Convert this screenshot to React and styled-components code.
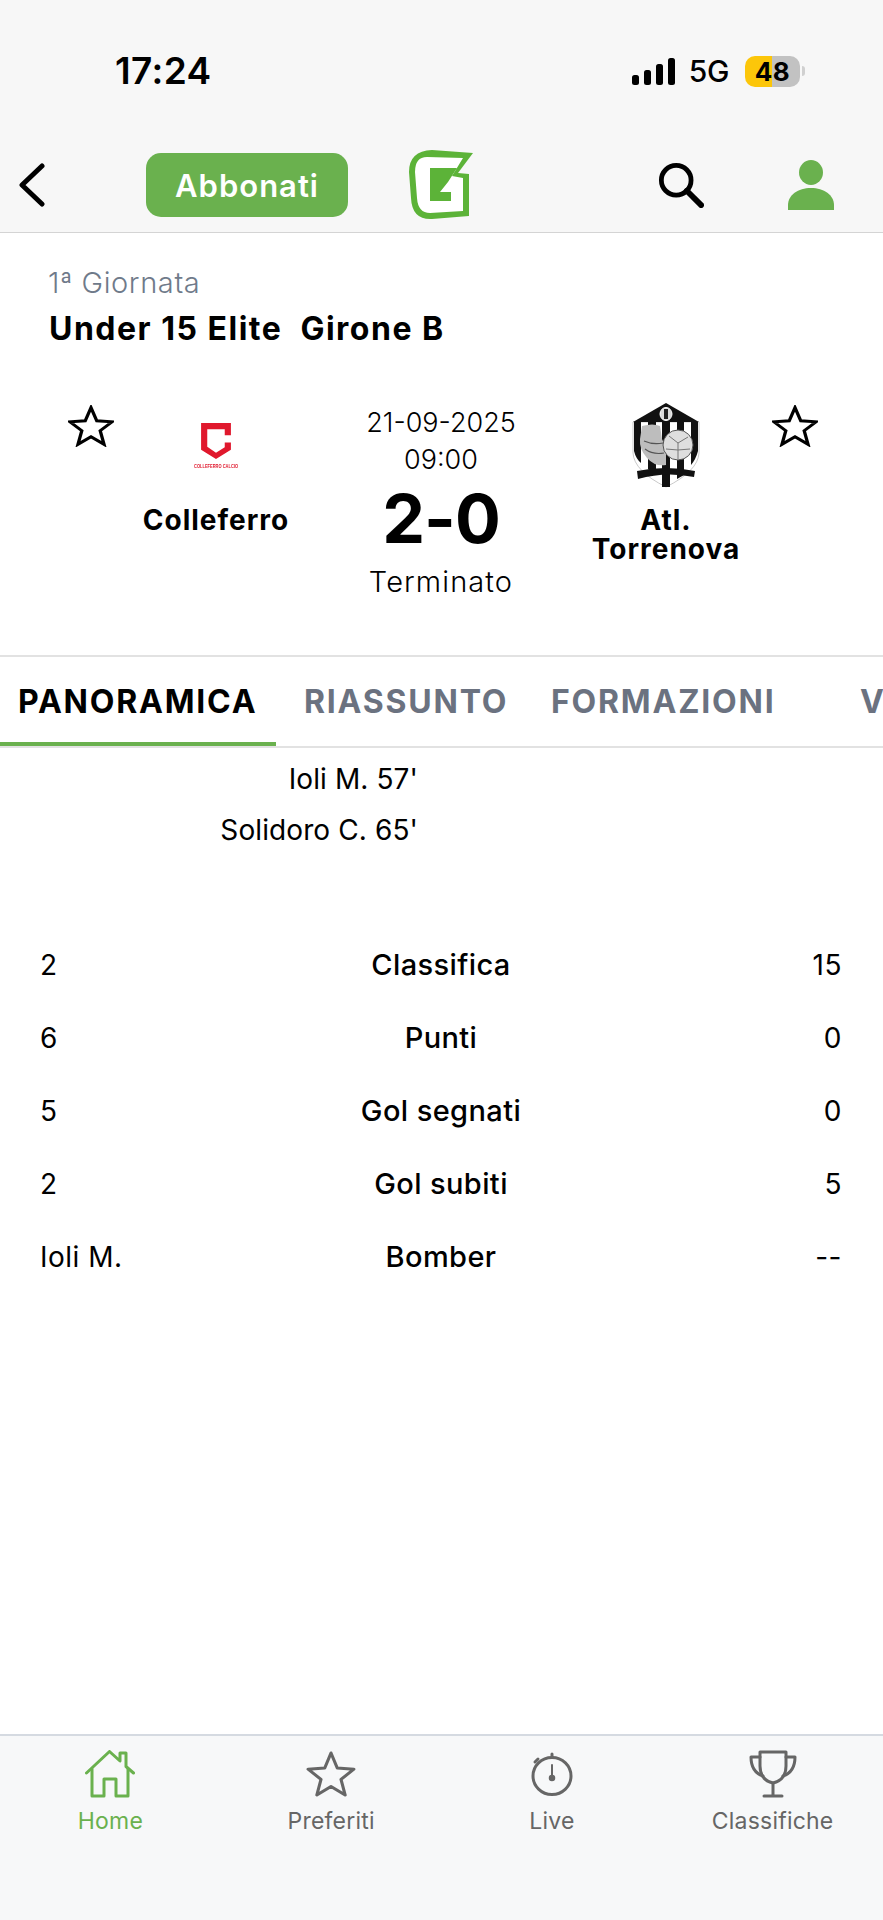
import React from "react";
import styled, { createGlobalStyle } from "styled-components";

const GlobalStyle = createGlobalStyle`
  html, body {
    margin: 0;
    padding: 0;
    background: #fff;
  }
  * {
    box-sizing: border-box;
  }
`;
const Page = styled.div`
  width: 883px;
  height: 1920px;
  display: flex;
  flex-direction: column;
  overflow: hidden;
  background: #fff;
  color: #000;
  font-family: Inter, "Open Sans", sans-serif;
`;
const TopArea = styled.header`
  background: #f7f7f7;
  border-bottom: 1px solid #d4d4d4;
`;
const StatusBar = styled.div`
  height: 138px;
  padding: 53px 78px 0 115px;
  display: flex;
  align-items: flex-start;
  justify-content: space-between;
`;
const Clock = styled.div`
  font-size: 37px;
  line-height: 36px;
  font-weight: 600;
  letter-spacing: 0.4px;
`;
const StatusIcons = styled.div`
  display: flex;
  align-items: center;
  height: 36px;
`;
const Network = styled.span`
  margin: 0 16px 0 14px;
  font-size: 30px;
  font-weight: 500;
  letter-spacing: -0.4px;
`;
const Battery = styled.div`
  width: 55px;
  height: 31px;
  border-radius: 10px;
  display: flex;
  align-items: center;
  justify-content: center;
  background: linear-gradient(to right, #fcc60a 0 49%, #c2c2c2 49% 100%);
  font-size: 26px;
  font-weight: 700;
  letter-spacing: 0.5px;
`;
const BatteryTip = styled.span`
  width: 3px;
  height: 10px;
  margin-left: 2px;
  border-radius: 0 3px 3px 0;
  background: #d0d0d0;
`;
const NavBar = styled.nav`
  height: 94px;
  padding-left: 19px;
  display: flex;
  align-items: center;
`;
const SubscribeButton = styled.button`
  width: 202px;
  height: 64px;
  margin: 0 59px 0 101px;
  padding: 0;
  border: 0;
  border-radius: 15px;
  background: #6ab14e;
  color: #fff;
  font-family: inherit;
  font-size: 31px;
  font-weight: 600;
  letter-spacing: 1px;
`;
const Logo = styled.svg`
  flex: none;
  margin-right: 183px;
`;
const SearchIcon = styled.svg`
  flex: none;
  margin-right: 84px;
`;
const Info = styled.section`
  padding: 32px 48px 0;
`;
const Round = styled.div`
  font-size: 29px;
  line-height: 36px;
  font-weight: 300;
  letter-spacing: 0.6px;
  color: #6f7a8a;
`;
const League = styled.h1`
  margin: 10px 0 0 1px;
  font-size: 32px;
  line-height: 36px;
  font-weight: 700;
  letter-spacing: 1.5px;
  white-space: pre;
`;
const Match = styled.section`
  height: 251px;
  margin-top: 57px;
  padding: 0 65px 0 68px;
  display: grid;
  grid-template-columns: 46px 204px 246px 204px 1fr;
  align-items: start;
`;
const FavStar = styled.svg`
  margin-top: 1px;
  justify-self: ${(p) => (p.$end ? "end" : "start")};
`;
const Team = styled.div`
  display: flex;
  flex-direction: column;
  align-items: center;
`;
const Crest = styled.div`
  height: 100px;
  display: flex;
  align-items: flex-start;
  justify-content: center;
`;
const ColleferroBadge = styled.div`
  margin-top: 19px;
  display: flex;
  flex-direction: column;
  align-items: center;
  gap: 4px;
  color: #e0182d;
`;
const BadgeText = styled.span`
  font-family: "Liberation Sans", sans-serif;
  font-size: 4px;
  line-height: 6px;
  font-weight: 700;
  white-space: nowrap;
  transform: scaleY(1.5);
`;
const TeamName = styled.div`
  margin-top: 2px;
  width: 190px;
  text-align: center;
  font-size: 28px;
  line-height: 29px;
  font-weight: 700;
  letter-spacing: 1px;
`;
const Center = styled.div`
  display: flex;
  flex-direction: column;
  align-items: center;
`;
const DateText = styled.div`
  font-size: 27px;
  line-height: 37px;
  font-weight: 300;
`;
const Score = styled.div`
  margin-top: -2px;
  font-size: 68px;
  line-height: 84px;
  font-weight: 700;
  letter-spacing: -1px;
`;
const MatchStatus = styled.div`
  margin-top: 4px;
  font-size: 29px;
  line-height: 36px;
  font-weight: 300;
  letter-spacing: 1.1px;
`;
const Tabs = styled.div`
  height: 93px;
  display: flex;
  gap: 10px;
  flex: none;
  overflow: hidden;
  border-top: 2px solid #e2e2e2;
  border-bottom: 2px solid #e2e2e2;
`;
const Tab = styled.div`
  position: relative;
  flex: none;
  width: ${(p) => p.$width}px;
  padding-left: 18px;
  line-height: 90px;
  font-size: 32px;
  font-weight: 700;
  letter-spacing: 1.8px;
  white-space: nowrap;
  color: ${(p) => (p.$active ? "#000" : "#6b7280")};
  &::after {
    content: "";
    display: ${(p) => (p.$active ? "block" : "none")};
    position: absolute;
    left: 0;
    right: 0;
    bottom: 0;
    height: 4px;
    background: #6ab14e;
  }
`;
const Main = styled.main`
  flex: 1;
`;
const Scorers = styled.div`
  width: 418px;
  margin-top: 6px;
  margin-bottom: 72px;
`;
const Scorer = styled.div`
  text-align: right;
  font-size: 28px;
  line-height: 51px;
  font-weight: 400;
  letter-spacing: 0.1px;
`;
const StatRow = styled.div`
  height: 73px;
  padding: 0 41px 0 40px;
  display: grid;
  grid-template-columns: 1fr auto 1fr;
  align-items: center;
  font-size: 28px;
  font-weight: 400;
  letter-spacing: 0.5px;
`;
const StatLabel = styled.span`
  font-size: 29px;
  font-weight: 450;
  letter-spacing: 0.4px;
`;
const StatRight = styled.span`
  text-align: right;
`;
const BottomNav = styled.nav`
  height: 186px;
  flex: none;
  padding-top: 14px;
  display: grid;
  grid-template-columns: repeat(4, 1fr);
  align-items: start;
  background: #f7f8f9;
  border-top: 2px solid #d5dae1;
`;
const NavItem = styled.div`
  display: flex;
  flex-direction: column;
  align-items: center;
  color: ${(p) => (p.$active ? "#6ab14e" : "#666")};
  font-size: 23px;
  font-weight: 400;
  letter-spacing: 0.2px;
`;
const NavIconBox = styled.div`
  height: 48px;
  display: flex;
  align-items: center;
  justify-content: center;
`;
const NavLabel = styled.span`
  margin-top: 9px;
  line-height: 28px;
`;

const STAR = "12,1.5 15,9 23,9.6 16.8,14.7 18.8,22.5 12,18.2 5.2,22.5 7.2,14.7 1,9.6 9,9";

const stats = [
  { left: "2", label: "Classifica", right: "15" },
  { left: "6", label: "Punti", right: "0" },
  { left: "5", label: "Gol segnati", right: "0" },
  { left: "2", label: "Gol subiti", right: "5" },
  { left: "Ioli M.", label: "Bomber", right: "--" },
];

function Signal() {
  return (
    <svg width="43" height="27" viewBox="0 0 43 27" fill="#000">
      <rect x="0" y="17" width="7" height="10" rx="2.5" />
      <rect x="12" y="12" width="7" height="15" rx="2.5" />
      <rect x="24" y="6" width="7" height="21" rx="2.5" />
      <rect x="36" y="0" width="7" height="27" rx="2.5" />
    </svg>
  );
}

function FavouriteStar({ end }) {
  return (
    <FavStar $end={end} width="46" height="42" viewBox="0 0 24 24" preserveAspectRatio="none">
      <polygon points={STAR} fill="none" stroke="#000" strokeWidth="1.7" strokeLinejoin="miter" />
    </FavStar>
  );
}

function Torrenova() {
  return (
    <svg width="68" height="86" viewBox="-1 -1 68 86" style={{ marginTop: -2, filter: "blur(0.5px)" }}>
      <path d="M0 19 H66 V50 Q65 68 33 84 Q1 68 0 50 Z" fill="#fff" stroke="#bbb" strokeWidth="0.8" />
      <path d="M1 19 H8 V60 Q3 56 1 48 Z" fill="#111" />
      <path d="M15 19 H23 V72 L15 66 Z" fill="#111" />
      <path d="M29 19 H37 V84 H29 Z" fill="#111" />
      <path d="M44 19 H51 V72 L44 76 Z" fill="#111" />
      <path d="M58 19 H65 V48 Q63 56 58 62 Z" fill="#111" />
      <path d="M33 0 L66 19 H0 Z" fill="#111" />
      <ellipse cx="33" cy="11" rx="6" ry="6.5" fill="#ddd" stroke="#fff" strokeWidth="1" />
      <rect x="31" y="6" width="4" height="10" fill="#222" />
      <path d="M9 23 Q20 20 27 23 L29 36 L33 45 L33 62 Q22 64 14 55 Q6 46 7 36 Z" fill="#bdbdbd" />
      <path d="M11 38 Q20 42 30 40 M12 46 Q20 52 31 50" stroke="#555" strokeWidth="1.2" fill="none" />
      <circle cx="45" cy="42" r="15" fill="#dedede" stroke="#555" strokeWidth="1" />
      <path d="M36 33 L45 40 L55 34 M45 40 L45 56 M33 46 L45 47 L57 46" stroke="#777" strokeWidth="1" fill="none" />
      <path d="M4 68 Q33 62 62 68 L61 74 Q33 68 5 76 Z" fill="#111" />
    </svg>
  );
}

function HomeIcon() {
  return (
    <svg width="50" height="48" viewBox="0 0 50 48" fill="none" stroke="#6ab14e" strokeWidth="3" strokeLinejoin="round" strokeLinecap="round">
      <path d="M1.5 23 L24.5 1.5 L35 11 V3 H41 V16.5 L48.5 23" />
      <path d="M7 19 V46 H19 V29 H31 V46 H43 V19" />
    </svg>
  );
}

function StarIcon() {
  return (
    <svg width="50" height="48" viewBox="0 0 24 24" preserveAspectRatio="none">
      <polygon points={STAR} fill="none" stroke="#666" strokeWidth="1.5" strokeLinejoin="round" />
    </svg>
  );
}

function StopwatchIcon() {
  return (
    <svg width="42" height="44" viewBox="0 0 42 44" fill="none" stroke="#666" strokeWidth="3" strokeLinecap="round">
      <ellipse cx="21" cy="24" rx="19" ry="18.5" />
      <path d="M21 2 V5 M7 7 L4 10" />
      <path d="M21 13 V24" strokeWidth="2" />
      <circle cx="21" cy="26" r="2.5" fill="#666" strokeWidth="1.5" />
    </svg>
  );
}

function TrophyIcon() {
  return (
    <svg width="48" height="48" viewBox="0 0 48 48" fill="none" stroke="#666" strokeWidth="3" strokeLinecap="round" strokeLinejoin="round">
      <path d="M11 2 H37 V16 Q37 30 24 33 Q11 30 11 16 Z" />
      <path d="M11 7 H2 Q2 22 14 26 M37 7 H46 Q46 22 34 26" />
      <path d="M24 33 V46 M15 46 H33" />
    </svg>
  );
}

function App() {
  return (
    <Page>
      <GlobalStyle />
      <TopArea>
        <StatusBar>
          <Clock>17:24</Clock>
          <StatusIcons>
            <Signal />
            <Network>5G</Network>
            <Battery>48</Battery>
            <BatteryTip />
          </StatusIcons>
        </StatusBar>
        <NavBar>
          <svg width="26" height="44" viewBox="0 0 26 44" fill="none" stroke="#000" strokeWidth="5" strokeLinecap="round" strokeLinejoin="round">
            <path d="M23 3 L3 22 L23 41" />
          </svg>
          <SubscribeButton>Abbonati</SubscribeButton>
          <Logo width="68" height="74" viewBox="27 18 68 74">
            <path d="M52 20 L93 23 L78 43 L89 44 L89 86 L52 89 Q32 90 31 68 L29 42 Q29 21 52 20 Z" fill="#5cb338" />
            <path d="M47 27 L83 28 L72 46 L83 48 L83 81 L50 83 Q38 83 37 68 L35 42 Q35 27 47 27 Z" fill="#fff" />
            <path d="M50 38 L77 38 L68 52 L60 62 L71 62 L71 71 L50 71 Z" fill="#5cb338" />
          </Logo>
          <SearchIcon width="46" height="46" viewBox="0 0 48 48" fill="none" stroke="#000" strokeLinecap="round">
            <circle cx="19" cy="19" r="15.5" strokeWidth="5" />
            <path d="M30 30 L45 45" strokeWidth="6" />
          </SearchIcon>
          <svg width="46" height="50" viewBox="0 0 46 50" fill="#6ab14e">
            <ellipse cx="23" cy="12.5" rx="12" ry="12.5" />
            <path d="M0 50 V45 C0 35 10 28 23 28 C36 28 46 35 46 45 V50 Z" />
          </svg>
        </NavBar>
      </TopArea>
      <Info>
        <Round>1ª Giornata</Round>
        <League>Under 15 Elite  Girone B</League>
      </Info>
      <Match>
        <FavouriteStar />
        <Team>
          <Crest>
            <ColleferroBadge>
              <svg width="30" height="36" viewBox="0 0 29 35" fill="currentColor">
                <path d="M0 0 H29 V12 H23 V6 H6 V23 L14.5 29 L23 23.5 V19 H29 V26 L14.5 35 L0 26 Z" />
              </svg>
              <BadgeText>COLLEFERRO CALCIO</BadgeText>
            </ColleferroBadge>
          </Crest>
          <TeamName>Colleferro</TeamName>
        </Team>
        <Center>
          <DateText>21-09-2025</DateText>
          <DateText>09:00</DateText>
          <Score>2-0</Score>
          <MatchStatus>Terminato</MatchStatus>
        </Center>
        <Team>
          <Crest>
            <Torrenova />
          </Crest>
          <TeamName>Atl. Torrenova</TeamName>
        </Team>
        <FavouriteStar end />
      </Match>
      <Tabs>
        <Tab $active $width={276}>PANORAMICA</Tab>
        <Tab $width={237}>RIASSUNTO</Tab>
        <Tab $width={299}>FORMAZIONI</Tab>
        <Tab $width={100}>VIDEO</Tab>
      </Tabs>
      <Main>
        <Scorers>
          <Scorer>Ioli M. 57'</Scorer>
          <Scorer>Solidoro C. 65'</Scorer>
        </Scorers>
        {stats.map((row) => (
          <StatRow key={row.label}>
            <span>{row.left}</span>
            <StatLabel>{row.label}</StatLabel>
            <StatRight>{row.right}</StatRight>
          </StatRow>
        ))}
      </Main>
      <BottomNav>
        <NavItem $active>
          <NavIconBox><HomeIcon /></NavIconBox>
          <NavLabel>Home</NavLabel>
        </NavItem>
        <NavItem>
          <NavIconBox><StarIcon /></NavIconBox>
          <NavLabel>Preferiti</NavLabel>
        </NavItem>
        <NavItem>
          <NavIconBox><StopwatchIcon /></NavIconBox>
          <NavLabel>Live</NavLabel>
        </NavItem>
        <NavItem>
          <NavIconBox><TrophyIcon /></NavIconBox>
          <NavLabel>Classifiche</NavLabel>
        </NavItem>
      </BottomNav>
    </Page>
  );
}

export default App;
